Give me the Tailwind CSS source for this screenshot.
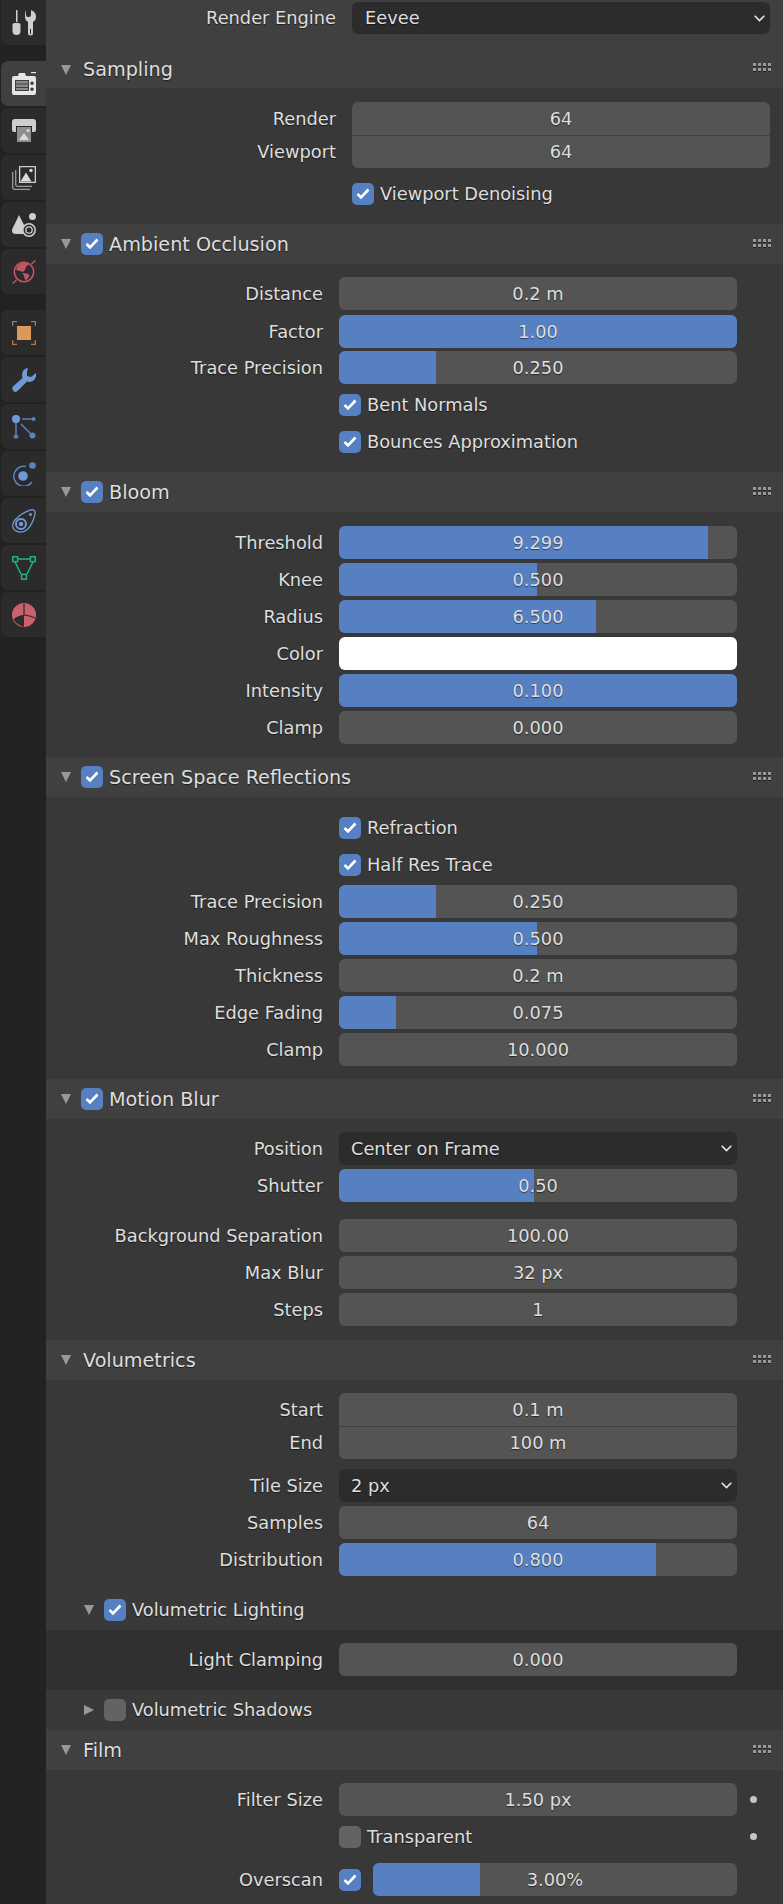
<!DOCTYPE html>
<html lang="en">
<head>
  <meta charset="UTF-8" />
  <title>Render Properties</title>
  <script src="https://cdn.jsdelivr.net/npm/@tailwindcss/browser@4"></script>
</head>
<body class="bg-[#383838]">
<div class="flex w-[783px] h-[1904px] overflow-hidden font-['DejaVu_Sans',sans-serif] text-[17.8px] leading-none text-[#dedede] [text-shadow:0_1px_1px_rgba(0,0,0,0.55)]">

  <!-- tabs -->
  <div class="w-[46px] shrink-0 bg-[#222222] flex flex-col items-end gap-[2px]">
    <div class="w-[45px] h-[45px] rounded-bl-[7px] bg-[#2b2b2b] flex items-center justify-center">
      <svg width="24" height="26" viewBox="0 0 24 26"><path fill="#cfcfcf" d="M4 0h1.500v12H4z"/><path fill="#cfcfcf" d="M.5 15q0-2 2-2h4q2 0 2 2v6q0 4-4 4t-4-4z"/><path fill="#cfcfcf" d="M14 0v5q0 2 2 2h1q2 0 2-2V0q5 2 5 6.500 0 4-3 5.500v11q0 2.500-2.500 2.500T16 23V12q-3-1.500-3-5.500Q13 2 14 0z"/><path fill="#2b2b2b" d="M18 19h1v5h-1z"/></svg>
    </div>
    <div class="w-[45px] h-[45px] mt-[14px] rounded-l-[7px] bg-[#404040] flex items-center justify-center">
      <svg width="24" height="24" viewBox="0 0 24 24"><path fill="#e6e6e6" fill-rule="evenodd" d="M2 4h4l1-3h6l1 3h8q2 0 2 2v15q0 2-2 2H2q-2 0-2-2V6q0-2 2-2zM3 8v11h14V8zm17 1.500a1.800 1.800 0 100 3.600 1.800 1.800 0 000-3.600zm0 6a1.800 1.800 0 100 3.600 1.800 1.800 0 000-3.600z"/><path fill="#8a8a8a" d="M4 9h12v2.500H4zM4 12.500h12V15H4zM4 16h12v2H4z"/><path fill="#e6e6e6" d="M19 0h5v1.200h-5z"/></svg>
    </div>
    <div class="w-[45px] h-[45px] rounded-l-[7px] bg-[#2b2b2b] flex items-center justify-center">
      <svg width="24" height="24" viewBox="0 0 24 24"><path fill="#cfcfcf" d="M3 0h18q3 0 3 3v8q0 2-2 2h-2V7H4v6H2q-2 0-2-2V3q0-3 3-3z"/><path fill="#8e8e8e" d="M5 8h14v15H5z"/><path fill="#dcdcdc" d="M7 21l5-7 5 7z"/><circle cx="16" cy="11.500" r="1.500" fill="#dcdcdc"/></svg>
    </div>
    <div class="w-[45px] h-[45px] rounded-l-[7px] bg-[#2b2b2b] flex items-center justify-center">
      <svg width="24" height="24" viewBox="0 0 24 24"><path fill="none" stroke="#9a9a9a" stroke-width="1.300" d="M.7 6v15q0 2.300 2.300 2.300h15M3.700 4v14.500q0 1.800 1.800 1.800H20"/><path fill="#cfcfcf" fill-rule="evenodd" d="M7 0h17v17H7zm1.300 1.300v14.400h14.400V1.300z"/><path fill="#dcdcdc" d="M8.500 15.500l5.500-9 5.500 9z"/><circle cx="19" cy="4.500" r="1.700" fill="#dcdcdc"/></svg>
    </div>
    <div class="w-[45px] h-[45px] rounded-l-[7px] bg-[#2b2b2b] flex items-center justify-center">
      <svg width="24" height="24" viewBox="0 0 24 24"><path fill="#cfcfcf" d="M7 2l6 12q-1 2-1 5 0 1 .3 2H4q-4 0-4-3.500Q0 16 2 12.500z"/><circle cx="20.500" cy="3.500" r="3.500" fill="#cfcfcf"/><circle cx="17" cy="17" r="6.200" fill="#2b2b2b" stroke="#cfcfcf" stroke-width="1.500"/><circle cx="17" cy="17" r="3.200" fill="none" stroke="#cfcfcf" stroke-width="1.300"/></svg>
    </div>
    <div class="w-[45px] h-[45px] rounded-l-[7px] bg-[#2b2b2b] flex items-center justify-center">
      <svg width="24" height="24" viewBox="0 0 24 24"><circle cx="12" cy="12" r="9.700" fill="#2b2b2b" stroke="#c0565f" stroke-width="1.600"/><path fill="#c0565f" d="M4 10q1-5 6-7 4-1 7 1l-3 3-1 3-2 2-3-1z"/><path fill="#c0565f" d="M10 13l5 .5 3 2-4 5-1.500-2-.5-3z"/><path stroke="#c0565f" stroke-width="1.500" fill="none" d="M.5 23.500l4-3.500M19.500 4l4-3.500"/></svg>
    </div>
    <div class="w-[45px] h-[45px] mt-[14px] rounded-l-[7px] bg-[#2b2b2b] flex items-center justify-center">
      <svg width="24" height="24" viewBox="0 0 24 24"><path fill="none" stroke="#a67a52" stroke-width="1.300" d="M.7 5V.7H5M19 .7h4.300V5M.7 19v4.300H5M19 23.300h4.300V19"/><rect x="5" y="5" width="14" height="14" fill="#d99a5b"/></svg>
    </div>
    <div class="w-[45px] h-[45px] rounded-l-[7px] bg-[#2b2b2b] flex items-center justify-center">
      <svg width="24" height="24" viewBox="0 0 24 24"><path fill="#6f9ad6" d="M16 0q-6 1-6 7 0 2 .5 3L1 18.500Q0 20 .5 21.500T3 24q1.500 0 2.500-1l9.500-9.500q5 1.500 7.500-2T24 5l-5 4-4-1 0-4z"/></svg>
    </div>
    <div class="w-[45px] h-[45px] rounded-l-[7px] bg-[#2b2b2b] flex items-center justify-center">
      <svg width="24" height="24" viewBox="0 0 24 24"><g fill="#6f9ad6"><circle cx="4" cy="4" r="4.200"/></g><g fill="#5a82bb" stroke="#5a82bb"><path d="M10 4h10" stroke-width="1.500"/><circle cx="21.500" cy="4" r="2" stroke="none"/><path d="M4 8v11" stroke-width="1.500"/><circle cx="4" cy="21.500" r="2.300" stroke="none"/><path d="M9 9l10 10" stroke-width="1.500"/><circle cx="20.500" cy="20.500" r="3" stroke="none"/></g></svg>
    </div>
    <div class="w-[45px] h-[45px] rounded-l-[7px] bg-[#2b2b2b] flex items-center justify-center">
      <svg width="24" height="24" viewBox="0 0 24 24"><circle cx="11" cy="14" r="4.800" fill="#6f9ad6"/><path fill="none" stroke="#5a82bb" stroke-width="1.500" d="M14 4.500A10 10 0 1 0 20 20"/><circle cx="20.500" cy="3.500" r="3.300" fill="#5a82bb"/></svg>
    </div>
    <div class="w-[45px] h-[45px] rounded-l-[7px] bg-[#2b2b2b] flex items-center justify-center">
      <svg width="24" height="24" viewBox="0 0 24 24"><path fill="none" stroke="#6f9ad6" stroke-width="1.300" d="M3 11Q9 4 19 .8q4-.5 4.200 3 0 3-3.200 10Q16 23.200 8 23.200 .7 22 .7 16.500 1 13 3 11z"/><circle cx="9" cy="15" r="5" fill="none" stroke="#6f9ad6" stroke-width="2"/><circle cx="9" cy="15" r="2.200" fill="#6f9ad6"/><circle cx="18.500" cy="5.500" r="1.500" fill="#6f9ad6"/></svg>
    </div>
    <div class="w-[45px] h-[45px] rounded-l-[7px] bg-[#2b2b2b] flex items-center justify-center">
      <svg width="24" height="24" viewBox="0 0 24 24" fill="none" stroke="#1fb58a" stroke-width="1.500"><path d="M5.500 3h13M3 6l6 12M21 6l-6 12"/><rect x=".8" y=".8" width="4.800" height="4.800"/><rect x="18.400" y=".8" width="4.800" height="4.800"/><rect x="9.600" y="18.400" width="4.800" height="4.800"/></svg>
    </div>
    <div class="w-[45px] h-[45px] rounded-l-[7px] bg-[#2b2b2b] flex items-center justify-center">
      <svg width="24" height="24" viewBox="0 0 24 24"><circle cx="12" cy="12" r="12" fill="#c9626c"/><path fill="#2b2b2b" d="M12 12Q6 12 1.500 16.500 5 22.500 12 23.700z"/><path fill="none" stroke="#2b2b2b" stroke-width="1.200" d="M12 .5V12Q18 12.500 23 15"/></svg>
    </div>
  </div>

  <!-- properties -->
  <div class="w-[737px] shrink-0">
    <div class="h-[52px] bg-[#404040] pt-[2px] flex items-start">
      <div class="w-[290px] leading-[32px] text-right">Render Engine</div>
      <div class="ml-4 w-[418px] h-[32px] rounded-[6px] bg-[#2c2c2c] pl-[13px] pr-[5px] flex items-center justify-between">Eevee
        <svg width="11" height="7" viewBox="0 0 11 7" fill="none" stroke="#e6e6e6" stroke-width="1.600"><path d="M.7.7l4.800 4.800L10.300.7"/></svg>
      </div>
    </div>

    <!-- Sampling -->
    <div class="h-[36px] bg-[#404040] flex items-center">
      <svg class="ml-[15px]" width="10" height="10" viewBox="0 0 10 10" fill="#999999"><path d="M0 0h10L5 10z"/></svg>
      <span class="ml-3 text-[19.2px]">Sampling</span>
      <svg class="ml-auto mr-3 mb-[5px]" width="18" height="9" viewBox="0 0 18 9"><path fill="#999999" d="M0 0h3v3H0zM5 0h3v3H5zM10 0h3v3h-3zM15 0h3v3h-3zM0 5h3v3H0zM5 5h3v3H5zM10 5h3v3h-3zM15 5h3v3h-3z"/><path fill="#222222" d="M0 3h3v1H0zM5 3h3v1H5zM10 3h3v1h-3zM15 3h3v1h-3zM0 8h3v1H0zM5 8h3v1H5zM10 8h3v1h-3zM15 8h3v1h-3z"/></svg>
    </div>
    <div class="h-[136px] pt-[14px]">
      <div class="flex items-center h-[33px]">
        <div class="w-[290px] text-right">Render</div>
        <div class="ml-4 w-[418px] h-[33px] rounded-t-[6px] bg-[#545454] flex items-center justify-center">64</div>
      </div>
      <div class="flex items-center h-[33px]">
        <div class="w-[290px] text-right">Viewport</div>
        <div class="ml-4 w-[418px] h-[33px] rounded-b-[6px] border-t border-[#3f3f3f] bg-[#545454] flex items-center justify-center">64</div>
      </div>
      <div class="flex items-center h-[33px] mt-[9px] ml-[306px]">
        <div class="w-[22px] h-[22px] rounded-[5px] bg-[#5680c2] flex items-center justify-center"><svg width="14" height="12" viewBox="0 0 14 12" fill="none" stroke="#ffffff" stroke-width="2.600"><path d="M1.500 6l3.500 3.500L12.500 1.500"/></svg></div>
        <span class="ml-[6px]">Viewport Denoising</span>
      </div>
    </div>

    <!-- Ambient Occlusion -->
    <div class="h-[40px] bg-[#404040] flex items-center">
      <svg class="ml-[15px]" width="10" height="10" viewBox="0 0 10 10" fill="#999999"><path d="M0 0h10L5 10z"/></svg>
      <div class="ml-[10px] w-[22px] h-[22px] rounded-[5px] bg-[#5680c2] flex items-center justify-center"><svg width="14" height="12" viewBox="0 0 14 12" fill="none" stroke="#ffffff" stroke-width="2.600"><path d="M1.500 6l3.500 3.500L12.500 1.500"/></svg></div>
      <span class="ml-[6px] text-[19.2px] translate-y-[1px]">Ambient Occlusion</span>
      <svg class="ml-auto mr-3 mb-[1px]" width="18" height="9" viewBox="0 0 18 9"><path fill="#999999" d="M0 0h3v3H0zM5 0h3v3H5zM10 0h3v3h-3zM15 0h3v3h-3zM0 5h3v3H0zM5 5h3v3H5zM10 5h3v3h-3zM15 5h3v3h-3z"/><path fill="#222222" d="M0 3h3v1H0zM5 3h3v1H5zM10 3h3v1h-3zM15 3h3v1h-3zM0 8h3v1H0zM5 8h3v1H5zM10 8h3v1h-3zM15 8h3v1h-3z"/></svg>
    </div>
    <div class="h-[208px] pt-[13px] flex flex-col gap-1">
      <div class="flex items-center h-[33px]">
        <div class="w-[277px] text-right">Distance</div>
        <div class="ml-4 w-[398px] h-[33px] rounded-[6px] bg-[#545454] flex items-center justify-center">0.2 m</div>
      </div>
      <div class="flex items-center h-[33px] mt-[1px]">
        <div class="w-[277px] text-right">Factor</div>
        <div class="ml-4 w-[398px] h-[33px] rounded-[6px] bg-[#5680c2] flex items-center justify-center">1.00</div>
      </div>
      <div class="flex items-center h-[33px] -mt-[1px]">
        <div class="w-[277px] text-right">Trace Precision</div>
        <div class="ml-4 w-[398px] h-[33px] rounded-[6px] bg-[#545454] overflow-hidden relative flex items-center justify-center"><div class="absolute left-0 top-0 h-full w-[97px] bg-[#5680c2]"></div><span class="relative">0.250</span></div>
      </div>
      <div class="flex items-center h-[33px] ml-[293px]">
        <div class="w-[22px] h-[22px] rounded-[5px] bg-[#5680c2] flex items-center justify-center"><svg width="14" height="12" viewBox="0 0 14 12" fill="none" stroke="#ffffff" stroke-width="2.600"><path d="M1.500 6l3.500 3.500L12.500 1.500"/></svg></div>
        <span class="ml-[6px]">Bent Normals</span>
      </div>
      <div class="flex items-center h-[33px] ml-[293px]">
        <div class="w-[22px] h-[22px] rounded-[5px] bg-[#5680c2] flex items-center justify-center"><svg width="14" height="12" viewBox="0 0 14 12" fill="none" stroke="#ffffff" stroke-width="2.600"><path d="M1.500 6l3.500 3.500L12.500 1.500"/></svg></div>
        <span class="ml-[6px]">Bounces Approximation</span>
      </div>
    </div>

    <!-- Bloom -->
    <div class="h-[40px] bg-[#404040] flex items-center">
      <svg class="ml-[15px]" width="10" height="10" viewBox="0 0 10 10" fill="#999999"><path d="M0 0h10L5 10z"/></svg>
      <div class="ml-[10px] w-[22px] h-[22px] rounded-[5px] bg-[#5680c2] flex items-center justify-center"><svg width="14" height="12" viewBox="0 0 14 12" fill="none" stroke="#ffffff" stroke-width="2.600"><path d="M1.500 6l3.500 3.500L12.500 1.500"/></svg></div>
      <span class="ml-[6px] text-[19.2px] translate-y-[1px]">Bloom</span>
      <svg class="ml-auto mr-3 mb-[1px]" width="18" height="9" viewBox="0 0 18 9"><path fill="#999999" d="M0 0h3v3H0zM5 0h3v3H5zM10 0h3v3h-3zM15 0h3v3h-3zM0 5h3v3H0zM5 5h3v3H5zM10 5h3v3h-3zM15 5h3v3h-3z"/><path fill="#222222" d="M0 3h3v1H0zM5 3h3v1H5zM10 3h3v1h-3zM15 3h3v1h-3zM0 8h3v1H0zM5 8h3v1H5zM10 8h3v1h-3zM15 8h3v1h-3z"/></svg>
    </div>
    <div class="h-[245px] pt-[14px] flex flex-col gap-1">
      <div class="flex items-center h-[33px]">
        <div class="w-[277px] text-right">Threshold</div>
        <div class="ml-4 w-[398px] h-[33px] rounded-[6px] bg-[#545454] overflow-hidden relative flex items-center justify-center"><div class="absolute left-0 top-0 h-full w-[369px] bg-[#5680c2]"></div><span class="relative">9.299</span></div>
      </div>
      <div class="flex items-center h-[33px]">
        <div class="w-[277px] text-right">Knee</div>
        <div class="ml-4 w-[398px] h-[33px] rounded-[6px] bg-[#545454] overflow-hidden relative flex items-center justify-center"><div class="absolute left-0 top-0 h-full w-[198px] bg-[#5680c2]"></div><span class="relative">0.500</span></div>
      </div>
      <div class="flex items-center h-[33px]">
        <div class="w-[277px] text-right">Radius</div>
        <div class="ml-4 w-[398px] h-[33px] rounded-[6px] bg-[#545454] overflow-hidden relative flex items-center justify-center"><div class="absolute left-0 top-0 h-full w-[257px] bg-[#5680c2]"></div><span class="relative">6.500</span></div>
      </div>
      <div class="flex items-center h-[33px]">
        <div class="w-[277px] text-right">Color</div>
        <div class="ml-4 w-[398px] h-[33px] rounded-[6px] bg-white"></div>
      </div>
      <div class="flex items-center h-[33px]">
        <div class="w-[277px] text-right">Intensity</div>
        <div class="ml-4 w-[398px] h-[33px] rounded-[6px] bg-[#5680c2] flex items-center justify-center">0.100</div>
      </div>
      <div class="flex items-center h-[33px]">
        <div class="w-[277px] text-right">Clamp</div>
        <div class="ml-4 w-[398px] h-[33px] rounded-[6px] bg-[#545454] flex items-center justify-center">0.000</div>
      </div>
    </div>

    <!-- Screen Space Reflections -->
    <div class="h-[40px] bg-[#404040] flex items-center">
      <svg class="ml-[15px]" width="10" height="10" viewBox="0 0 10 10" fill="#999999"><path d="M0 0h10L5 10z"/></svg>
      <div class="ml-[10px] w-[22px] h-[22px] rounded-[5px] bg-[#5680c2] flex items-center justify-center"><svg width="14" height="12" viewBox="0 0 14 12" fill="none" stroke="#ffffff" stroke-width="2.600"><path d="M1.500 6l3.500 3.500L12.500 1.500"/></svg></div>
      <span class="ml-[6px] text-[19.2px] translate-y-[1px]">Screen Space Reflections</span>
      <svg class="ml-auto mr-3 mb-[1px]" width="18" height="9" viewBox="0 0 18 9"><path fill="#999999" d="M0 0h3v3H0zM5 0h3v3H5zM10 0h3v3h-3zM15 0h3v3h-3zM0 5h3v3H0zM5 5h3v3H5zM10 5h3v3h-3zM15 5h3v3h-3z"/><path fill="#222222" d="M0 3h3v1H0zM5 3h3v1H5zM10 3h3v1h-3zM15 3h3v1h-3zM0 8h3v1H0zM5 8h3v1H5zM10 8h3v1h-3zM15 8h3v1h-3z"/></svg>
    </div>
    <div class="h-[282px] pt-[14px] flex flex-col gap-1">
      <div class="flex items-center h-[33px] ml-[293px]">
        <div class="w-[22px] h-[22px] rounded-[5px] bg-[#5680c2] flex items-center justify-center"><svg width="14" height="12" viewBox="0 0 14 12" fill="none" stroke="#ffffff" stroke-width="2.600"><path d="M1.500 6l3.500 3.500L12.500 1.500"/></svg></div>
        <span class="ml-[6px]">Refraction</span>
      </div>
      <div class="flex items-center h-[33px] ml-[293px]">
        <div class="w-[22px] h-[22px] rounded-[5px] bg-[#5680c2] flex items-center justify-center"><svg width="14" height="12" viewBox="0 0 14 12" fill="none" stroke="#ffffff" stroke-width="2.600"><path d="M1.500 6l3.500 3.500L12.500 1.500"/></svg></div>
        <span class="ml-[6px]">Half Res Trace</span>
      </div>
      <div class="flex items-center h-[33px]">
        <div class="w-[277px] text-right">Trace Precision</div>
        <div class="ml-4 w-[398px] h-[33px] rounded-[6px] bg-[#545454] overflow-hidden relative flex items-center justify-center"><div class="absolute left-0 top-0 h-full w-[97px] bg-[#5680c2]"></div><span class="relative">0.250</span></div>
      </div>
      <div class="flex items-center h-[33px]">
        <div class="w-[277px] text-right">Max Roughness</div>
        <div class="ml-4 w-[398px] h-[33px] rounded-[6px] bg-[#545454] overflow-hidden relative flex items-center justify-center"><div class="absolute left-0 top-0 h-full w-[198px] bg-[#5680c2]"></div><span class="relative">0.500</span></div>
      </div>
      <div class="flex items-center h-[33px]">
        <div class="w-[277px] text-right">Thickness</div>
        <div class="ml-4 w-[398px] h-[33px] rounded-[6px] bg-[#545454] flex items-center justify-center">0.2 m</div>
      </div>
      <div class="flex items-center h-[33px]">
        <div class="w-[277px] text-right">Edge Fading</div>
        <div class="ml-4 w-[398px] h-[33px] rounded-[6px] bg-[#545454] overflow-hidden relative flex items-center justify-center"><div class="absolute left-0 top-0 h-full w-[57px] bg-[#5680c2]"></div><span class="relative">0.075</span></div>
      </div>
      <div class="flex items-center h-[33px]">
        <div class="w-[277px] text-right">Clamp</div>
        <div class="ml-4 w-[398px] h-[33px] rounded-[6px] bg-[#545454] flex items-center justify-center">10.000</div>
      </div>
    </div>

    <!-- Motion Blur -->
    <div class="h-[40px] bg-[#404040] flex items-center">
      <svg class="ml-[15px]" width="10" height="10" viewBox="0 0 10 10" fill="#999999"><path d="M0 0h10L5 10z"/></svg>
      <div class="ml-[10px] w-[22px] h-[22px] rounded-[5px] bg-[#5680c2] flex items-center justify-center"><svg width="14" height="12" viewBox="0 0 14 12" fill="none" stroke="#ffffff" stroke-width="2.600"><path d="M1.500 6l3.500 3.500L12.500 1.500"/></svg></div>
      <span class="ml-[6px] text-[19.2px] translate-y-[1px]">Motion Blur</span>
      <svg class="ml-auto mr-3 mb-[1px]" width="18" height="9" viewBox="0 0 18 9"><path fill="#999999" d="M0 0h3v3H0zM5 0h3v3H5zM10 0h3v3h-3zM15 0h3v3h-3zM0 5h3v3H0zM5 5h3v3H5zM10 5h3v3h-3zM15 5h3v3h-3z"/><path fill="#222222" d="M0 3h3v1H0zM5 3h3v1H5zM10 3h3v1h-3zM15 3h3v1h-3zM0 8h3v1H0zM5 8h3v1H5zM10 8h3v1h-3zM15 8h3v1h-3z"/></svg>
    </div>
    <div class="h-[221px] pt-[13px] flex flex-col gap-1">
      <div class="flex items-center h-[33px]">
        <div class="w-[277px] text-right">Position</div>
        <div class="ml-4 w-[398px] h-[33px] rounded-[6px] bg-[#2c2c2c] pl-3 pr-[5px] flex items-center justify-between">Center on Frame
          <svg width="11" height="7" viewBox="0 0 11 7" fill="none" stroke="#e6e6e6" stroke-width="1.600"><path d="M.7.7l4.800 4.800L10.300.7"/></svg>
        </div>
      </div>
      <div class="flex items-center h-[33px]">
        <div class="w-[277px] text-right">Shutter</div>
        <div class="ml-4 w-[398px] h-[33px] rounded-[6px] bg-[#545454] overflow-hidden relative flex items-center justify-center"><div class="absolute left-0 top-0 h-full w-[195px] bg-[#5680c2]"></div><span class="relative">0.50</span></div>
      </div>
      <div class="flex items-center h-[33px] mt-[13px]">
        <div class="w-[277px] text-right">Background Separation</div>
        <div class="ml-4 w-[398px] h-[33px] rounded-[6px] bg-[#545454] flex items-center justify-center">100.00</div>
      </div>
      <div class="flex items-center h-[33px]">
        <div class="w-[277px] text-right">Max Blur</div>
        <div class="ml-4 w-[398px] h-[33px] rounded-[6px] bg-[#545454] flex items-center justify-center">32 px</div>
      </div>
      <div class="flex items-center h-[33px]">
        <div class="w-[277px] text-right">Steps</div>
        <div class="ml-4 w-[398px] h-[33px] rounded-[6px] bg-[#545454] flex items-center justify-center">1</div>
      </div>
    </div>

    <!-- Volumetrics -->
    <div class="h-[40px] bg-[#404040] flex items-center">
      <svg class="ml-[15px]" width="10" height="10" viewBox="0 0 10 10" fill="#999999"><path d="M0 0h10L5 10z"/></svg>
      <span class="ml-3 text-[19.2px] translate-y-[1px]">Volumetrics</span>
      <svg class="ml-auto mr-3 mb-[1px]" width="18" height="9" viewBox="0 0 18 9"><path fill="#999999" d="M0 0h3v3H0zM5 0h3v3H5zM10 0h3v3h-3zM15 0h3v3h-3zM0 5h3v3H0zM5 5h3v3H5zM10 5h3v3h-3zM15 5h3v3h-3z"/><path fill="#222222" d="M0 3h3v1H0zM5 3h3v1H5zM10 3h3v1h-3zM15 3h3v1h-3zM0 8h3v1H0zM5 8h3v1H5zM10 8h3v1h-3zM15 8h3v1h-3z"/></svg>
    </div>
    <div class="h-[210px] pt-[13px] flex flex-col">
      <div class="flex items-center h-[33px]">
        <div class="w-[277px] text-right">Start</div>
        <div class="ml-4 w-[398px] h-[33px] rounded-t-[6px] bg-[#545454] flex items-center justify-center">0.1 m</div>
      </div>
      <div class="flex items-center h-[33px]">
        <div class="w-[277px] text-right">End</div>
        <div class="ml-4 w-[398px] h-[33px] rounded-b-[6px] border-t border-[#3f3f3f] bg-[#545454] flex items-center justify-center">100 m</div>
      </div>
      <div class="flex items-center h-[33px] mt-[10px]">
        <div class="w-[277px] text-right">Tile Size</div>
        <div class="ml-4 w-[398px] h-[33px] rounded-[6px] bg-[#2c2c2c] pl-3 pr-[5px] flex items-center justify-between">2 px
          <svg width="11" height="7" viewBox="0 0 11 7" fill="none" stroke="#e6e6e6" stroke-width="1.600"><path d="M.7.7l4.800 4.800L10.300.7"/></svg>
        </div>
      </div>
      <div class="flex items-center h-[33px] mt-1">
        <div class="w-[277px] text-right">Samples</div>
        <div class="ml-4 w-[398px] h-[33px] rounded-[6px] bg-[#545454] flex items-center justify-center">64</div>
      </div>
      <div class="flex items-center h-[33px] mt-1">
        <div class="w-[277px] text-right">Distribution</div>
        <div class="ml-4 w-[398px] h-[33px] rounded-[6px] bg-[#545454] overflow-hidden relative flex items-center justify-center"><div class="absolute left-0 top-0 h-full w-[317px] bg-[#5680c2]"></div><span class="relative">0.800</span></div>
      </div>
    </div>
    <!-- sub panels -->
    <div class="h-[40px] bg-[#393939] flex items-center">
      <svg class="ml-[38px]" width="10" height="10" viewBox="0 0 10 10" fill="#999999"><path d="M0 0h10L5 10z"/></svg>
      <div class="ml-[10px] w-[22px] h-[22px] rounded-[5px] bg-[#5680c2] flex items-center justify-center"><svg width="14" height="12" viewBox="0 0 14 12" fill="none" stroke="#ffffff" stroke-width="2.600"><path d="M1.500 6l3.500 3.500L12.500 1.500"/></svg></div>
      <span class="ml-[6px]">Volumetric Lighting</span>
    </div>
    <div class="h-[60px] bg-[#303030] pt-[13px]">
      <div class="flex items-center h-[33px]">
        <div class="w-[277px] text-right">Light Clamping</div>
        <div class="ml-4 w-[398px] h-[33px] rounded-[6px] bg-[#545454] flex items-center justify-center">0.000</div>
      </div>
    </div>
    <div class="h-[40px] bg-[#393939] flex items-center">
      <svg class="ml-[38px]" width="10" height="10" viewBox="0 0 10 10" fill="#999999"><path d="M0 0l10 5L0 10z"/></svg>
      <div class="ml-[10px] w-[22px] h-[22px] rounded-[5px] bg-[#636363]"></div>
      <span class="ml-[6px]">Volumetric Shadows</span>
    </div>

    <!-- Film -->
    <div class="h-[40px] bg-[#404040] flex items-center">
      <svg class="ml-[15px]" width="10" height="10" viewBox="0 0 10 10" fill="#999999"><path d="M0 0h10L5 10z"/></svg>
      <span class="ml-3 text-[19.2px] translate-y-[1px]">Film</span>
      <svg class="ml-auto mr-3 mb-[1px]" width="18" height="9" viewBox="0 0 18 9"><path fill="#999999" d="M0 0h3v3H0zM5 0h3v3H5zM10 0h3v3h-3zM15 0h3v3h-3zM0 5h3v3H0zM5 5h3v3H5zM10 5h3v3h-3zM15 5h3v3h-3z"/><path fill="#222222" d="M0 3h3v1H0zM5 3h3v1H5zM10 3h3v1h-3zM15 3h3v1h-3zM0 8h3v1H0zM5 8h3v1H5zM10 8h3v1h-3zM15 8h3v1h-3z"/></svg>
    </div>
    <div class="pt-[13px]">
      <div class="flex items-center h-[33px]">
        <div class="w-[277px] text-right">Filter Size</div>
        <div class="ml-4 w-[398px] h-[33px] rounded-[6px] bg-[#545454] flex items-center justify-center">1.50 px</div>
        <div class="ml-[13px] w-[7px] h-[7px] rounded-full bg-[#c4c4c4]"></div>
      </div>
      <div class="flex items-center h-[33px] mt-1">
        <div class="ml-[293px] w-[22px] h-[22px] rounded-[5px] bg-[#636363]"></div>
        <span class="ml-[6px]">Transparent</span>
        <div class="ml-auto mr-[26px] w-[7px] h-[7px] rounded-full bg-[#c4c4c4]"></div>
      </div>
      <div class="flex items-center h-[33px] mt-[10px]">
        <div class="w-[277px] text-right">Overscan</div>
        <div class="ml-4 w-[22px] h-[22px] rounded-[5px] bg-[#5680c2] flex items-center justify-center"><svg width="14" height="12" viewBox="0 0 14 12" fill="none" stroke="#ffffff" stroke-width="2.600"><path d="M1.500 6l3.500 3.500L12.500 1.500"/></svg></div>
        <div class="ml-3 w-[364px] h-[33px] rounded-[6px] bg-[#545454] overflow-hidden relative flex items-center justify-center"><div class="absolute left-0 top-0 h-full w-[107px] bg-[#5680c2]"></div><span class="relative">3.00%</span></div>
      </div>
    </div>
  </div>
</div>
</body>
</html>
